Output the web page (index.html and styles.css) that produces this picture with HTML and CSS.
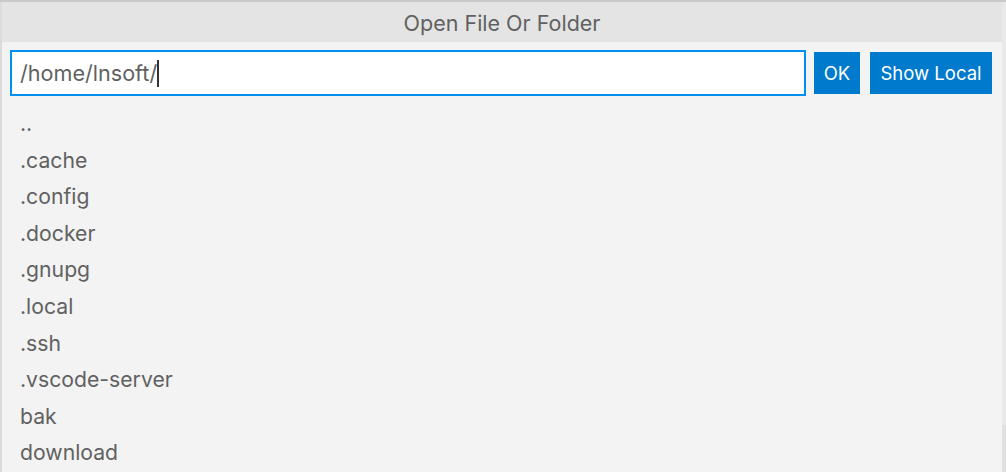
FILE: index.html
```html
<!DOCTYPE html>
<html lang="en">
<head>
    <meta charset="UTF-8">
    <title>Open File Or Folder</title>
    <link rel="stylesheet" href="styles.css">
</head>
<body>
    <div class="frame">
        <div class="dialog">
            <div class="title">Open File Or Folder</div>
            <div class="content">
                <div class="input-row">
                    <div class="path-input">/home/lnsoft/<span class="caret"></span></div>
                    <button class="btn ok">OK</button>
                    <button class="btn local">Show Local</button>
                </div>
                <ul class="file-list">
                    <li>..</li>
                    <li>.cache</li>
                    <li>.config</li>
                    <li>.docker</li>
                    <li>.gnupg</li>
                    <li>.local</li>
                    <li>.ssh</li>
                    <li>.vscode-server</li>
                    <li>bak</li>
                    <li>download</li>
                </ul>
            </div>
        </div>
        <div class="scroll-strip"><div class="thumb"></div></div>
    </div>
</body>
</html>
```
FILE: styles.css
```css
body {
    margin: 0;
    font-family: Inter, "Open Sans", sans-serif;
    background-color: #f3f3f3;
    overflow: hidden;
}
.frame {
    display: flex;
    height: 472px;
    border-top: 2px solid #c9c9c9;
    box-sizing: border-box;
}
.dialog {
    flex: 1;
    background-color: #f3f3f3;
    border-left: 2px solid #dcdcdc;
    display: flex;
    flex-direction: column;
}
.title {
    height: 40px;
    line-height: 42px;
    background-color: #e4e4e4;
    color: #616161;
    text-align: center;
    font-size: 21.5px;
}
.content {
    padding: 8px 10px 0 8px;
}
.input-row {
    display: flex;
    align-items: center;
}
.path-input {
    flex: 1;
    height: 46px;
    box-sizing: border-box;
    border: 2px solid #0090f1;
    background-color: #fff;
    color: #616161;
    font-size: 21.6px;
    line-height: 42px;
    padding-left: 8px;
    display: flex;
    align-items: center;
}
.caret {
    display: inline-block;
    width: 2px;
    height: 27px;
    background-color: #333;
}
.btn {
    height: 42px;
    border: none;
    background-color: #007acc;
    color: #fff;
    font-family: inherit;
    font-size: 18.5px;
    padding: 0;
    margin-left: 8px;
}
.btn.ok {
    width: 46px;
}
.btn.local {
    width: 122px;
    margin-left: 10px;
}
.file-list {
    list-style: none;
    margin: 9px 0 0;
    padding: 0 0 0 10px;
}
.file-list li {
    height: 36.6px;
    line-height: 36.6px;
    font-size: 21.2px;
    color: #616161;
}
.scroll-strip {
    width: 4px;
    background-color: #e0e0e0;
}
.thumb {
    height: 423px;
    background-color: #e9e9e9;
}
```
